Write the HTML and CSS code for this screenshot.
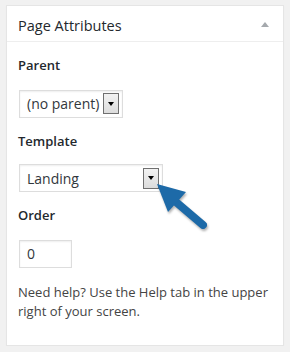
FILE: index.html
```html
<!DOCTYPE html>
<html lang="en">
<head>
  <meta charset="UTF-8" />
  <title>Page Attributes</title>
  <link rel="stylesheet" href="styles.css">
</head>
<body>

  <div class="postbox">
    <div class="hndle">
      <h2>Page Attributes</h2>
      <span class="toggle-indicator"></span>
    </div>

    <div class="inside">
      <p class="field-label">Parent</p>
      <div class="select parent-select">
        <span class="select-text">(no parent)</span>
        <span class="select-btn"><span class="caret"></span></span>
      </div>

      <p class="field-label">Template</p>
      <div class="select template-select">
        <span class="select-text">Landing</span>
        <span class="select-btn"><span class="caret"></span></span>
      </div>

      <p class="field-label">Order</p>
      <div class="order-input">0</div>

      <p class="help">Need help? Use the Help tab in the upper right of your screen.</p>
    </div>
  </div>

  <!-- callout arrow pointing at the template dropdown -->
  <svg class="callout" width="70" height="60" viewBox="150 178 70 60">
    <line x1="176" y1="202" x2="203" y2="225" stroke="#1d6aa8" stroke-width="8" stroke-linecap="round"/>
    <polygon points="157,184 186,192 178,201 168,212" fill="#1d6aa8"/>
  </svg>

</body>
</html>
```

FILE: styles.css
```css
body {
  margin: 0;
  background-color: #f1f1f1;
  font-family: 'Open Sans', sans-serif;
  font-size: 13px;
  color: #23282d;
}

.postbox {
  margin: 5px 6px 0;
  background: #fff;
  border: 1px solid #e5e5e5;
  box-shadow: 0 1px 1px rgba(0,0,0,0.04);
}

.hndle {
  display: flex;
  align-items: center;
  height: 35px;
  padding: 0 12px 0 11px;
  border-bottom: 1px solid #eee;
}

.hndle h2 {
  margin: 0;
  font-size: 14.5px;
  font-weight: 400;
  line-height: 20px;
  padding-top: 4px;
}

.toggle-indicator {
  margin-left: auto;
  margin-right: 2px;
  margin-top: 2px;
  width: 0;
  height: 0;
  border-left: 4px solid transparent;
  border-right: 4px solid transparent;
  border-bottom: 5px solid #a5a9ad;
}

.inside {
  padding: 0 12px 23px 11px;
}

.field-label {
  margin: 14px 0 14px;
  font-weight: 600;
  line-height: 19.5px;
}

.select {
  display: flex;
  align-items: center;
  box-sizing: border-box;
  height: 28px;
  padding: 0 3px 0 7px;
  border: 1px solid #ddd;
  box-shadow: inset 0 1px 2px rgba(0,0,0,0.07);
  font-size: 14px;
  color: #32373c;
}

.parent-select {
  width: 104px;
  margin-left: 1px;
}

.template-select {
  width: 144px;
  margin-left: 1px;
  margin-top: -1px;
}

.select-text {
  flex: 1;
}

.select-btn {
  display: flex;
  align-items: center;
  justify-content: center;
  box-sizing: border-box;
  width: 16px;
  height: 21px;
  border: 1px solid #707070;
  background: linear-gradient(#f2f2f2, #dcdcdc);
}

.caret {
  width: 0;
  height: 0;
  border-left: 3px solid transparent;
  border-right: 3px solid transparent;
  border-top: 4px solid #000;
}

.order-input {
  box-sizing: border-box;
  width: 53px;
  height: 28px;
  margin-left: 1px;
  padding: 0 7px;
  border: 1px solid #ddd;
  box-shadow: inset 0 1px 2px rgba(0,0,0,0.07);
  font-size: 14px;
  line-height: 26px;
  color: #32373c;
}

.help {
  margin: 15px 0 0;
  line-height: 19.5px;
  color: #444;
}

.callout {
  position: absolute;
  left: 150px;
  top: 178px;
  filter: drop-shadow(1px 2px 1px rgba(0,0,0,0.3));
}
```
